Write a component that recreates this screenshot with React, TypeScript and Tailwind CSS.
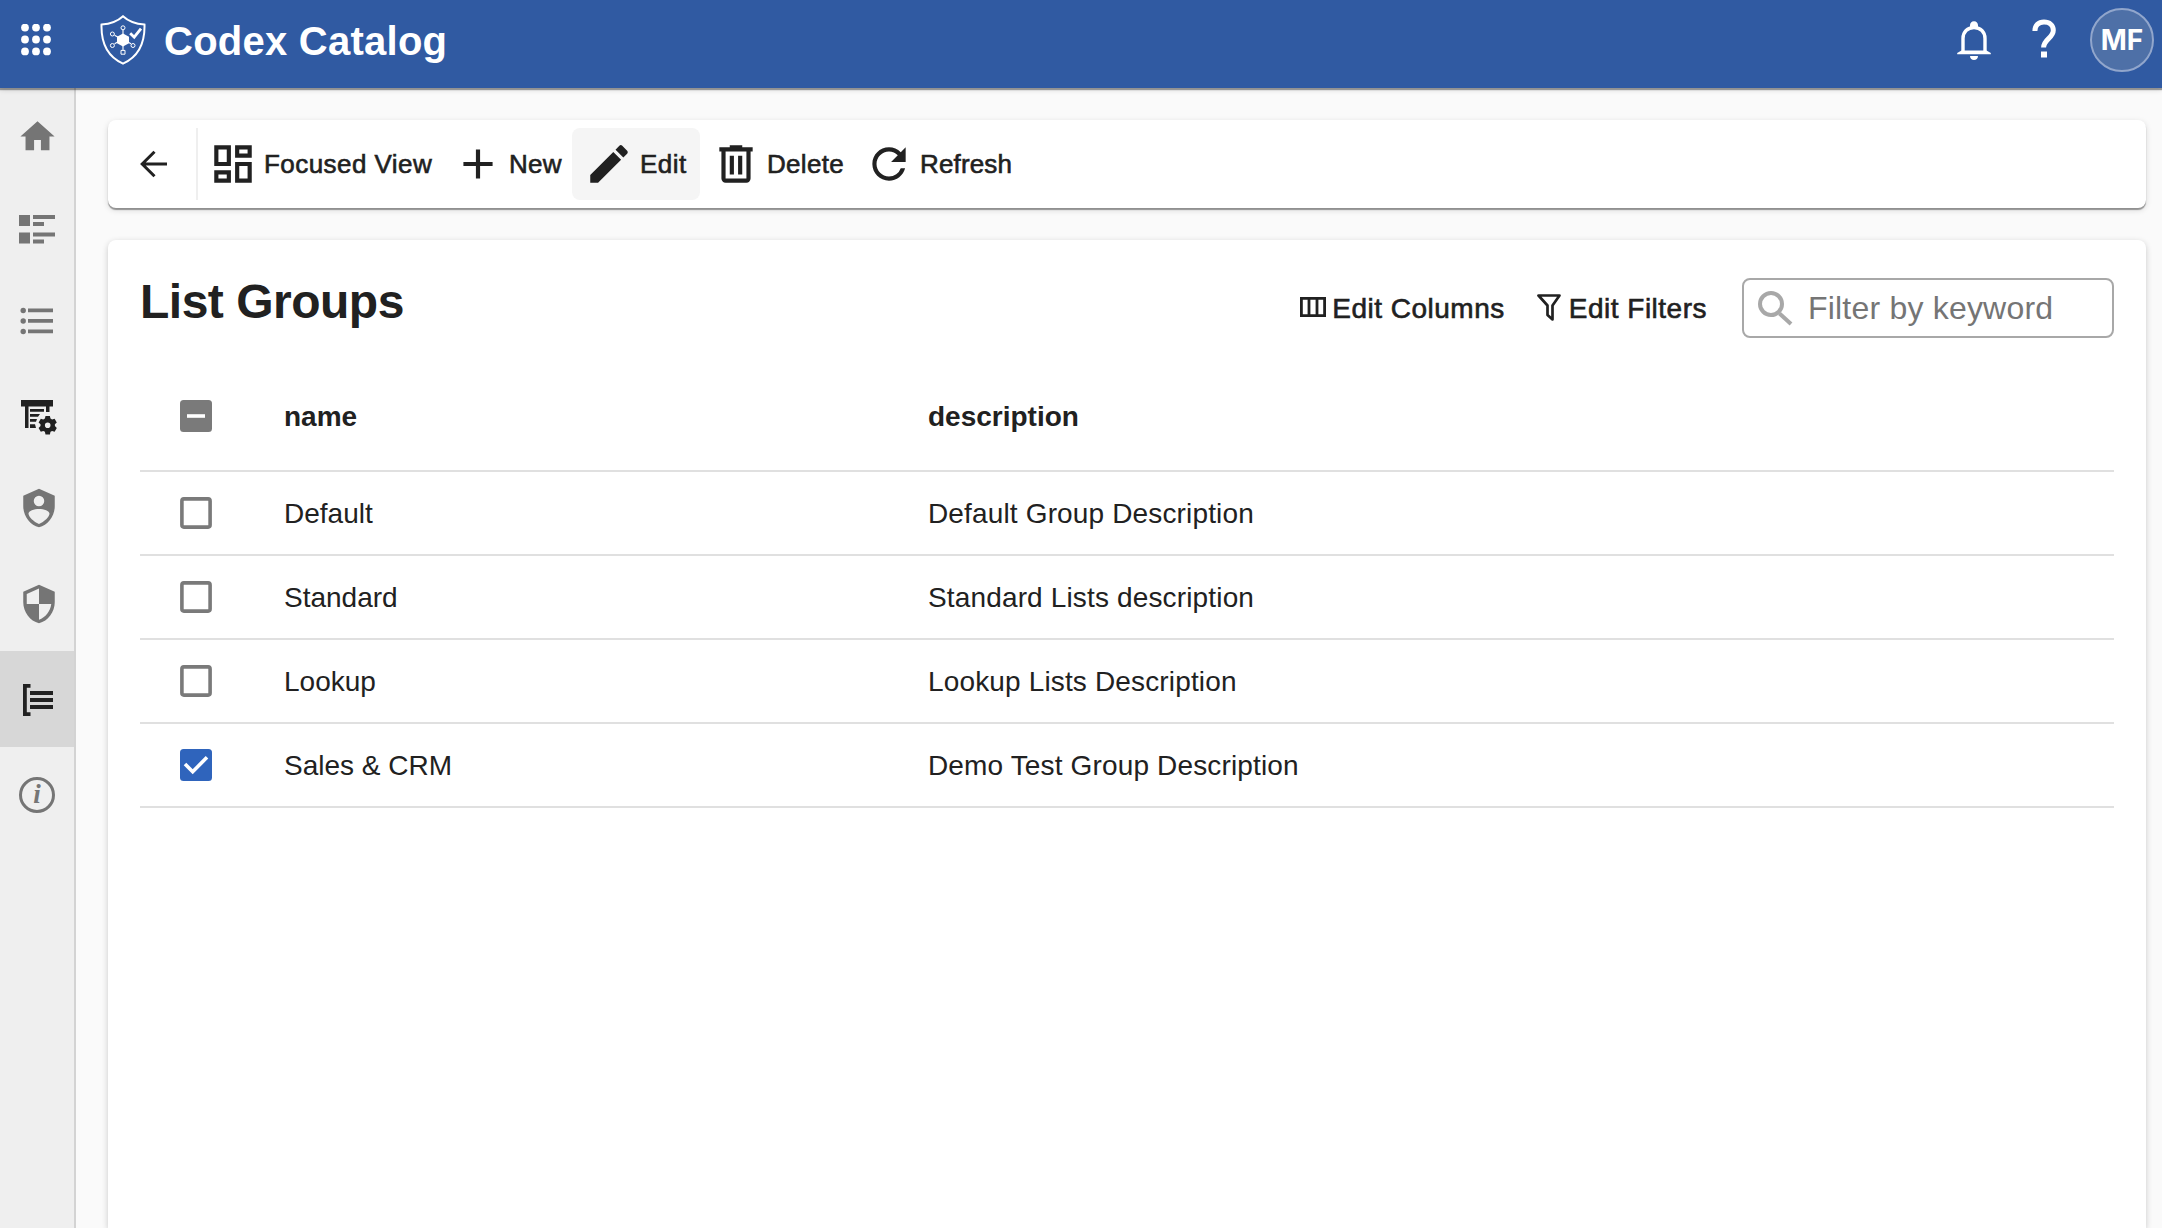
import type { ReactNode } from "react";

interface IconProps {
  className?: string;
  children: ReactNode;
}

// Todos los iconos comparten el viewBox de 24x24 de Material
function Icon({ className = "size-[50px]", children }: IconProps) {
  return (
    <svg viewBox="0 0 24 24" fill="currentColor" className={`block shrink-0 ${className}`}>
      {children}
    </svg>
  );
}

const SHIELD = "M12 1 3 5v6c0 5.55 3.84 10.74 9 12 5.16-1.26 9-6.45 9-12V5l-9-4z";

function AppsIcon() {
  return (
    <svg viewBox="0 0 32 32" fill="currentColor" className="block size-8">
      {[3.6, 15.5, 27.4].map((y) => [5, 16, 27].map((x) => <circle key={`${x}-${y}`} cx={x} cy={y} r="3.9" />))}
    </svg>
  );
}

function Logo() {
  return (
    <svg viewBox="0 0 46 50" fill="none" stroke="currentColor" className="block h-[50px] w-[46px]">
      <path d="M23 1.3C18 6 10 9 1.5 9.6 1 28 8 42 23 48.7 38 42 45 28 44.5 9.6 36 9 28 6 23 1.3z" strokeWidth="2" />
      <path d="M23 18.5l6 3.3v6.4l-6 3.3-6-3.3v-6.4z" fill="currentColor" stroke="none" />
      <path d="M23 15v5M14.6 20.2l4 2.3M14.6 28.8l4-2.3M31 28.8l-4-2.3M23 30v5" strokeWidth="1.1" />
      <circle cx="23" cy="12.8" r="2" strokeWidth="1" />
      <circle cx="12.4" cy="19" r="2" strokeWidth="1" />
      <circle cx="12.4" cy="30.5" r="2" strokeWidth="1" />
      <circle cx="33" cy="30.5" r="2" strokeWidth="1" />
      <path d="M21 35.4h4v3.8h-4z" strokeWidth="1" />
      <path d="M30.2 18.2l4 4 6.8-8.6" strokeWidth="2.8" />
    </svg>
  );
}

function BellIcon() {
  return (
    <svg viewBox="0 0 34 40" fill="none" stroke="currentColor" className="block h-10 w-[34px]">
      <path d="M6 31V17.5C6 11 10.5 6.5 17 6.5S28 11 28 17.5V31" strokeWidth="3.4" />
      <path d="M17 .3c2.5 0 4 1.7 4 4v2h-8v-2c0-2.3 1.5-4 4-4z" fill="currentColor" stroke="none" />
      <path d="M4.5 29.5L.2 32v1.3h33.6V32l-4.3-2.5z" fill="currentColor" stroke="none" />
      <path d="M13 35h8c0 2.4-1.8 4-4 4s-4-1.6-4-4z" fill="currentColor" stroke="none" />
    </svg>
  );
}

function Header() {
  return (
    <header className="relative z-10 flex h-[88px] shrink-0 bg-[#305aa2] text-white shadow-[0_1px_1px_1px_rgba(0,0,0,0.35),0_2px_5px_rgba(0,0,0,0.14)]">
      <div className="ml-5 mt-6">
        <AppsIcon />
      </div>
      <div className="ml-12 mt-[15px]">
        <Logo />
      </div>
      <h1 className="ml-[18px] mt-[17px] text-[40px] font-bold leading-[48px] tracking-[0.25px]">Codex Catalog</h1>
      <div className="ml-auto flex">
        <div className="mt-[21px] mr-[26px]">
          <BellIcon />
        </div>
        <svg viewBox="0 0 52 46" className="mt-[16px] mr-[21px] h-[46px] w-[52px]" fill="none" stroke="currentColor">
          <path d="M17.9 15C17.9 9.3 21.5 6 27 6s9.3 3.300 9.3 8.200c0 8-9.7 8.8-9.7 17.3" strokeWidth="5" />
          <path d="M24 35.5h6v6h-6z" fill="currentColor" stroke="none" />
        </svg>
        <div className="mt-2 mr-2 flex size-16 items-center justify-center rounded-full border-2 border-[#91a6cc] bg-[#4e70a7] font-['Inter'] text-[28px] font-bold">
          MF
        </div>
      </div>
    </header>
  );
}

interface NavItemProps {
  className: string;
  children: ReactNode;
}

function NavItem({ className, children }: NavItemProps) {
  return <a className={`flex w-full shrink-0 items-center justify-center ${className}`}>{children}</a>;
}

function Sidebar() {
  return (
    <nav className="flex w-[76px] shrink-0 flex-col border-r-2 border-[#d3d3d3] bg-[#efefef] text-[#757575]">
      <NavItem className="h-[95px] pt-0.5">
        <Icon className="size-[41px]">
          <path d="M10 20v-6h4v6h5v-8h3L12 3 2 12h3v8z" />
        </Icon>
      </NavItem>
      <NavItem className="h-[93px]">
        <svg viewBox="0 0 36 29" fill="currentColor" className="h-[29px] w-9">
          <path d="M0 0h11v11H0zM14 0h22v4H14zM14 7h11v4H14zM0 17.5h11v11H0zM14 17.5h22v4H14zM14 24.5h11v4H14z" />
        </svg>
      </NavItem>
      <NavItem className="h-[90px]">
        <svg viewBox="0 0 34 28" fill="currentColor" className="h-7 w-[34px]">
          <circle cx="3.2" cy="3.5" r="2.7" />
          <circle cx="3.2" cy="14" r="2.7" />
          <circle cx="3.2" cy="24.5" r="2.7" />
          <path d="M8 1.6h25v3.7H8zM8 12.1h25v3.7H8zM8 22.6h25v3.7H8z" />
        </svg>
      </NavItem>
      <NavItem className="h-[94px] text-[#212121]">
        <svg viewBox="0 0 36 36" fill="currentColor" className="mt-[7px] ml-[3px] size-9">
          <path d="M0 1h32v6.5H0zM4 7h3.5v22H4zM25 7h3.5v6H25z" />
          <path d="M9 10h14v2.7H9zM9 15h10l-2 2.8H9zM9 20h7l-1 2.8H9zM9 25.3h5l1 3.7H9z" />
          <path
            transform="translate(14.7 14)"
            fillRule="evenodd"
            d="M9.8 3h4.400l.6 2.600 1.600.9 2.500-.8 2.200 3.800-1.900 1.800v1.800l1.900 1.800-2.200 3.800-2.500-.8-1.600.9-.6 2.600H9.800l-.6-2.600-1.600-.9-2.500.8-2.200-3.800 1.900-1.800v-1.800L2.900 9.500l2.200-3.800 2.500.8 1.600-.9zM12 9.400a2.800 2.800 0 1 0 0 5.600 2.800 2.800 0 0 0 0-5.600z"
          />
        </svg>
      </NavItem>
      <NavItem className="h-[95px]">
        <Icon className="ml-1 size-[42px]">
          <path
            fillRule="evenodd"
            d={`${SHIELD}M12 5a3 3 0 1 0 0 6 3 3 0 0 0 0-6zM12 12.6c-2.8 0-6 1-6 2.7 0 1.5 3 4.8 6 5.8 3-1 6-4.3 6-5.8 0-1.7-3.2-2.7-6-2.700z`}
          />
        </Icon>
      </NavItem>
      <NavItem className="h-24">
        <Icon className="ml-1 mt-0.5 size-[42px]">
          <path d="M12 1 3 5v6c0 5.55 3.84 10.74 9 12 5.16-1.26 9-6.45 9-12V5l-9-4zm0 10.99h7c-.53 4.12-3.28 7.79-7 8.94V12H5V6.3l7-3.11v8.8z" />
        </Icon>
      </NavItem>
      <NavItem className="h-24 bg-[#d7d7d7] text-[#212121]">
        <svg viewBox="0 0 30 32" fill="currentColor" className="ml-[2px] mt-[2px] h-8 w-[30px]">
          <path d="M0 0h7.5v3.7H3.8v24.6h3.7V32H0zM7 7h23v4H7zM7 14h23v4H7zM7 21h23v4H7z" />
        </svg>
      </NavItem>
      <NavItem className="h-24">
        <span className="flex size-9 items-center justify-center rounded-full border-3 border-current pb-[2px] font-['Liberation_Serif'] text-[27px] font-bold italic leading-none">
          i
        </span>
      </NavItem>
    </nav>
  );
}

interface ToolbarButtonProps {
  label: string;
  className: string;
  path: string;
}

function ToolbarButton({ label, className, path }: ToolbarButtonProps) {
  return (
    <button className={`flex h-[72px] shrink-0 items-center gap-1.5 whitespace-nowrap text-[26px] [-webkit-text-stroke:0.6px_#212121] ${className}`}>
      <Icon>
        <path d={path} />
      </Icon>
      {label}
    </button>
  );
}

function Toolbar() {
  return (
    <div className="flex h-[88px] shrink-0 items-center rounded-lg bg-white shadow-[0_2px_1px_rgba(0,0,0,0.36),0_2px_6px_rgba(0,0,0,0.14)]">
      <button className="flex h-[72px] w-[90px] items-center justify-center border-r-2 border-[#efefef]">
        <svg viewBox="0 0 28 28" fill="none" stroke="currentColor" strokeWidth="3" className="ml-[3px] size-7">
          <path d="M27 14H3M14.5 1.7L2.2 14l12.3 12.3" />
        </svg>
      </button>
      <ToolbarButton
        label="Focused View"
        className="w-[243px] pl-[10px] tracking-[0.45px]"
        path="M19 5v2h-4V5h4M9 5v6H5V5h4m10 8v6h-4v-6h4M9 17v2H5v-2h4M21 3h-8v6h8V3zM11 3H3v10h8V3zm10 8h-8v10h8V11zm-10 4H3v6h8v-6z"
      />
      <ToolbarButton label="New" className="w-[131px] pl-3 tracking-[0.3px]" path="M19 13h-6v6h-2v-6H5v-2h6V5h2v6h6v2z" />
      <ToolbarButton
        label="Edit"
        className="w-32 rounded-lg bg-[#f5f5f5] pl-3 tracking-[0.5px]"
        path="M3 17.25V21h3.75L17.81 9.94l-3.75-3.75L3 17.25zM20.71 7.04c.39-.39.39-1.02 0-1.41l-2.34-2.34a.9959.9959 0 0 0-1.41 0l-1.83 1.83 3.75 3.75 1.83-1.83z"
      />
      <ToolbarButton
        label="Delete"
        className="w-[154px] pl-[11px] tracking-[0.3px]"
        path="M7 21q-.825 0-1.412-.587Q5 19.825 5 19V6H4V4h5V3h6v1h5v2h-1v13q0 .825-.587 1.413Q17.825 21 17 21zM17 6H7v13h10zM9 17h2V8H9zm4 0h2V8h-2z"
      />
      <ToolbarButton
        label="Refresh"
        className="pl-[10px] tracking-[0.15px]"
        path="M17.65 6.35A7.958 7.958 0 0 0 12 4c-4.42 0-7.99 3.58-7.99 8s3.57 8 7.99 8c3.73 0 6.84-2.55 7.73-6h-2.08A5.99 5.99 0 0 1 12 18c-3.31 0-6-2.69-6-6s2.69-6 6-6c1.66 0 3.14.69 4.22 1.78L13 11h7V4l-2.35 2.35z"
      />
    </div>
  );
}

interface CheckboxProps {
  state: "off" | "on" | "mixed";
}

function Checkbox({ state }: CheckboxProps) {
  return (
    <svg viewBox="0 0 32 32" fill="none" strokeWidth="3.6" className="block size-8">
      {state === "off" && <rect x="1.9" y="1.9" width="28.2" height="28.2" rx="2" stroke="#7a7a7a" />}
      {state === "on" && (
        <>
          <rect width="32" height="32" rx="3.5" fill="#2f64bc" />
          <path d="M5 15l7.7 7.700L27 8.300" stroke="#fff" />
        </>
      )}
      {state === "mixed" && (
        <>
          <rect width="32" height="32" rx="3.5" fill="#7a7a7a" />
          <path d="M7 16h18" stroke="#fff" />
        </>
      )}
    </svg>
  );
}

const groups = [
  { name: "Default", description: "Default Group Description", selected: false },
  { name: "Standard", description: "Standard Lists description", selected: false },
  { name: "Lookup", description: "Lookup Lists Description", selected: false },
  { name: "Sales & CRM", description: "Demo Test Group Description", selected: true },
];

function GroupsTable() {
  return (
    <div className="text-[28px]">
      <div className="grid h-[112px] grid-cols-[144px_644px_1fr] items-center border-b-2 border-[#e0e0e0] pt-0.5 font-bold">
        <div className="pl-10">
          <Checkbox state="mixed" />
        </div>
        <div className="pt-0.5">name</div>
        <div className="pt-0.5">description</div>
      </div>
      {groups.map((group) => (
        <div key={group.name} className="grid h-[84px] grid-cols-[144px_644px_1fr] items-center border-b-2 border-[#e0e0e0]">
          <div className="pl-10">
            <Checkbox state={group.selected ? "on" : "off"} />
          </div>
          <div className="pt-0.5">{group.name}</div>
          <div className="pt-0.5 tracking-[0.15px]">{group.description}</div>
        </div>
      ))}
    </div>
  );
}

export default function App() {
  return (
    <div className="flex h-screen flex-col overflow-hidden bg-[#fafafa] font-['Liberation_Sans',sans-serif] text-[#212121]">
      <Header />
      <div className="flex min-h-0 flex-1">
        <Sidebar />
        <main className="flex min-w-0 flex-1 flex-col gap-8 pt-8 pr-4 pl-8">
          <Toolbar />

          {/* Panel principal */}
          <section className="flex-1 rounded-t-lg bg-white px-8 shadow-[0_2px_6px_rgba(0,0,0,0.2)]">
            <div className="flex h-[120px]">
              <h2 className="mt-[34px] text-[48px] font-bold leading-[56px] tracking-[-0.5px]">List Groups</h2>
              <div className="ml-auto mt-[38px] flex h-[60px] items-center text-[28px]">
                <button className="flex items-center whitespace-nowrap pt-0.5 tracking-[0.5px] [-webkit-text-stroke:0.6px_#212121]">
                  <svg viewBox="0 0 26 20" fill="none" stroke="currentColor" strokeWidth="2.8" className="mr-[6px] mb-1 h-5 w-[26px]">
                    <path d="M1.4 1.4h23.2v17.2H1.4zM9 1.4v17.2M17 1.4v17.2" />
                  </svg>
                  Edit Columns
                </button>
                <button className="ml-8 flex items-center whitespace-nowrap pt-0.5 tracking-[0.5px] [-webkit-text-stroke:0.6px_#212121]">
                  <svg viewBox="0 0 24 27" fill="none" stroke="currentColor" strokeWidth="2.7" strokeLinejoin="round" className="mr-2 mb-1 h-[27px] w-6">
                    <path d="M1.5 1.5h21l-7 10v14l-5-4.5v-9.500z" />
                  </svg>
                  Edit Filters
                </button>
                <label className="ml-[35px] flex h-[60px] w-[372px] items-center rounded-lg border-2 border-[#a8a8a8] pl-[14px]">
                  <svg viewBox="0 0 35 35" fill="none" stroke="#a8a8a8" strokeWidth="4" className="mr-[15px] size-[35px] shrink-0">
                    <circle cx="13" cy="13" r="11" />
                    <path d="M21.5 22.5L33 33" />
                  </svg>
                  <input
                    placeholder="Filter by keyword"
                    className="w-full min-w-0 bg-transparent text-[32px] tracking-[0.2px] outline-none placeholder:text-[#757575]"
                  />
                </label>
              </div>
            </div>
            <GroupsTable />
          </section>
        </main>
      </div>
    </div>
  );
}
